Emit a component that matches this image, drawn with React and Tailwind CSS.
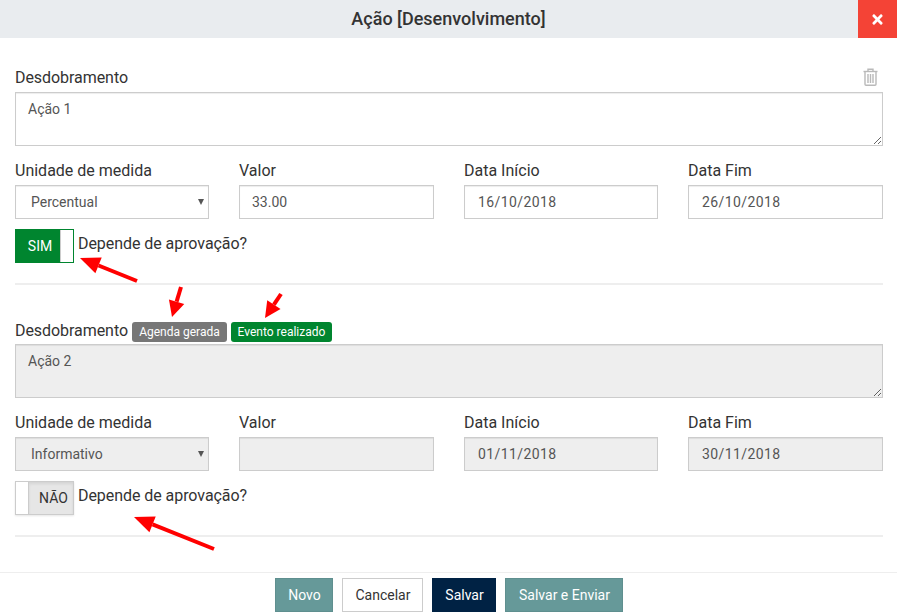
import React from "react";
import { FaTimes } from "react-icons/fa";

const font = { fontFamily: "Roboto, sans-serif" };

function Arrow({ x1, y1, x2, y2, head = 20, wide = 8.5 }) {
  const dx = x2 - x1, dy = y2 - y1;
  const len = Math.hypot(dx, dy);
  const ux = dx / len, uy = dy / len;
  const bx = x2 - ux * head, by = y2 - uy * head;
  const px = -uy * wide, py = ux * wide;
  return (
    <g>
      <line x1={x1} y1={y1} x2={bx} y2={by} stroke="#ff0000" strokeWidth="4" />
      <polygon points={`${x2},${y2} ${bx + px},${by + py} ${bx - px},${by - py}`} fill="#ff0000" />
    </g>
  );
}

function Trash() {
  return (
    <svg width="15" height="18" viewBox="0 0 15 18" fill="none" stroke="#b9b9b9" strokeWidth="1.4">
      <path d="M0.5 3.5H14.5" />
      <path d="M5 3.5V1.2H10V3.5" />
      <path d="M2 3.5V16.2Q2 17.3 3 17.3H12Q13 17.3 13 16.2V3.5" />
      <path d="M5 6V15M7.5 6V15M10 6V15" />
    </svg>
  );
}

const labelCls = "block text-[16px] leading-[20px] text-[#333]";
const fieldCls = "block w-full h-[34px] border border-[#ccc] text-[14px] text-[#555] outline-none shadow-[inset_0_1px_1px_rgba(0,0,0,0.075)]";

function Row({ unit, valor, ini, fim, disabled }) {
  const bg = disabled ? "bg-[#eee]" : "bg-white";
  return (
    <div className="grid grid-cols-[194px_195px_194px_195px] gap-x-[30px] mt-[15px]">
      <div>
        <label className={labelCls}>Unidade de medida</label>
        <div className="relative mt-[4px]">
          <select disabled={disabled} defaultValue={unit} className={`${fieldCls} ${bg} pl-[15px] pr-6 appearance-none opacity-100`}>
            <option>{unit}</option>
          </select>
          <svg className="absolute left-[183px] top-[14px]" width="6" height="7" viewBox="0 0 6 7">
            <polygon points="0,0 6,0 3,6" fill="#555" />
          </svg>
        </div>
      </div>
      <div>
        <label className={labelCls}>Valor</label>
        <input readOnly disabled={disabled} value={valor} className={`${fieldCls} ${bg} px-3 mt-[4px]`} />
      </div>
      {[["Data Início", ini], ["Data Fim", fim]].map(([l, v]) => (
        <div key={l}>
          <label className={labelCls}>{l}</label>
          <input readOnly disabled={disabled} value={v} className={`${fieldCls} ${bg} px-[13px] mt-[4px] tracking-[0.4px]`} />
        </div>
      ))}
    </div>
  );
}

function Toggle({ on }) {
  return (
    <div className="flex items-start mt-[10px]">
      {on ? (
        <div className="flex w-[59px] h-[34px] border border-[#00852f]">
          <div className="w-[44px] bg-[#00852f] text-white text-[14px] flex items-center justify-center pl-[4px]">SIM</div>
          <div className="flex-1 bg-white border-l border-[#ccc]"></div>
        </div>
      ) : (
        <div className="flex w-[59px] h-[34px] border border-[#ccc] shadow-[0_1px_2px_rgba(0,0,0,0.1)]">
          <div className="w-[13px] bg-white border-r border-[#ccc]"></div>
          <div className="flex-1 bg-[#e6e6e6] text-[#333] text-[14px] flex items-center justify-center pl-[5px] shadow-[inset_0_2px_3px_rgba(0,0,0,0.08)]">NÃO</div>
        </div>
      )}
      <span className="ml-[4px] text-[16px] leading-[20px] text-[#333] mt-[5px] tracking-[-0.06px]">Depende de aprovação?</span>
    </div>
  );
}

function Btn({ cls, children }) {
  return <button className={`h-[34px] border text-[14px] pl-[2px] ${cls}`}>{children}</button>;
}

export default function App() {
  return (
    <div style={font} className="relative w-[897px] h-[615px] bg-white overflow-hidden flex flex-col">
      <header className="relative h-[38px] shrink-0 bg-[#e9ecef] flex items-center justify-center">
        <h1 className="text-[18px] leading-[20px] font-medium text-[#333]">Ação [Desenvolvimento]</h1>
        <div className="absolute right-0 top-0 w-[39px] h-[38px] bg-[#f44336] flex items-center justify-center text-white">
          <FaTimes size={15} />
        </div>
      </header>

      <main className="flex-1 pl-[15px] pr-[14px]">
        <div className="flex justify-between items-end mt-[29px] h-[25px]">
          <label className={`${labelCls} pb-[4px] tracking-[-0.06px]`}>Desdobramento</label>
          <div className="mr-[5px] mb-[6px]"><Trash /></div>
        </div>
        <textarea readOnly value="Ação 1" className={`${fieldCls} h-[54px] bg-white px-3 py-[6px] leading-[20px]`} />
        <Row unit="Percentual" valor="33.00" ini="16/10/2018" fim="26/10/2018" />
        <Toggle on />
        <div className="h-[2px] bg-[#eee] mt-[20px]"></div>

        <div className="flex items-center mt-[34px] h-[25px] pb-[1px]">
          <label className={`${labelCls} tracking-[-0.06px]`}>Desdobramento</label>
          <span className="ml-[4px] mt-[2px] w-[95px] h-[20px] text-center rounded-[3px] bg-[#777] text-white text-[12px] leading-[20px]">Agenda gerada</span>
          <span className="ml-[4px] mt-[2px] w-[101px] h-[20px] text-center rounded-[3px] bg-[#00852f] text-white text-[12px] leading-[20px]">Evento realizado</span>
        </div>
        <textarea readOnly disabled value="Ação 2" className={`${fieldCls} h-[54px] bg-[#eee] px-3 py-[6px] leading-[20px]`} />
        <Row unit="Informativo" valor="" ini="01/11/2018" fim="30/11/2018" disabled />
        <Toggle />
        <div className="h-[2px] bg-[#eee] mt-[20px]"></div>
      </main>

      <footer className="h-[43px] shrink-0 border-t border-[#eee] flex justify-center gap-[9px] pt-[5px]">
        <Btn cls="w-[58px] bg-[#669999] border-[#5f8f8f] text-white">Novo</Btn>
        <Btn cls="w-[81px] bg-white border-[#ccc] text-[#333]">Cancelar</Btn>
        <Btn cls="w-[64px] bg-[#002244] border-[#002244] text-white">Salvar</Btn>
        <Btn cls="w-[118px] bg-[#669999] border-[#5f8f8f] text-white">Salvar e Enviar</Btn>
      </footer>

      <svg className="absolute left-0 top-0 pointer-events-none" width="897" height="615">
        <Arrow x1={137} y1={281} x2={80} y2={258} />
        <Arrow x1={181} y1={287} x2={172} y2={317} head={16} wide={8} />
        <Arrow x1={281} y1={294} x2={265} y2={318} head={16} wide={8} />
        <Arrow x1={214} y1={549} x2={134} y2={517} />
      </svg>
    </div>
  );
}
